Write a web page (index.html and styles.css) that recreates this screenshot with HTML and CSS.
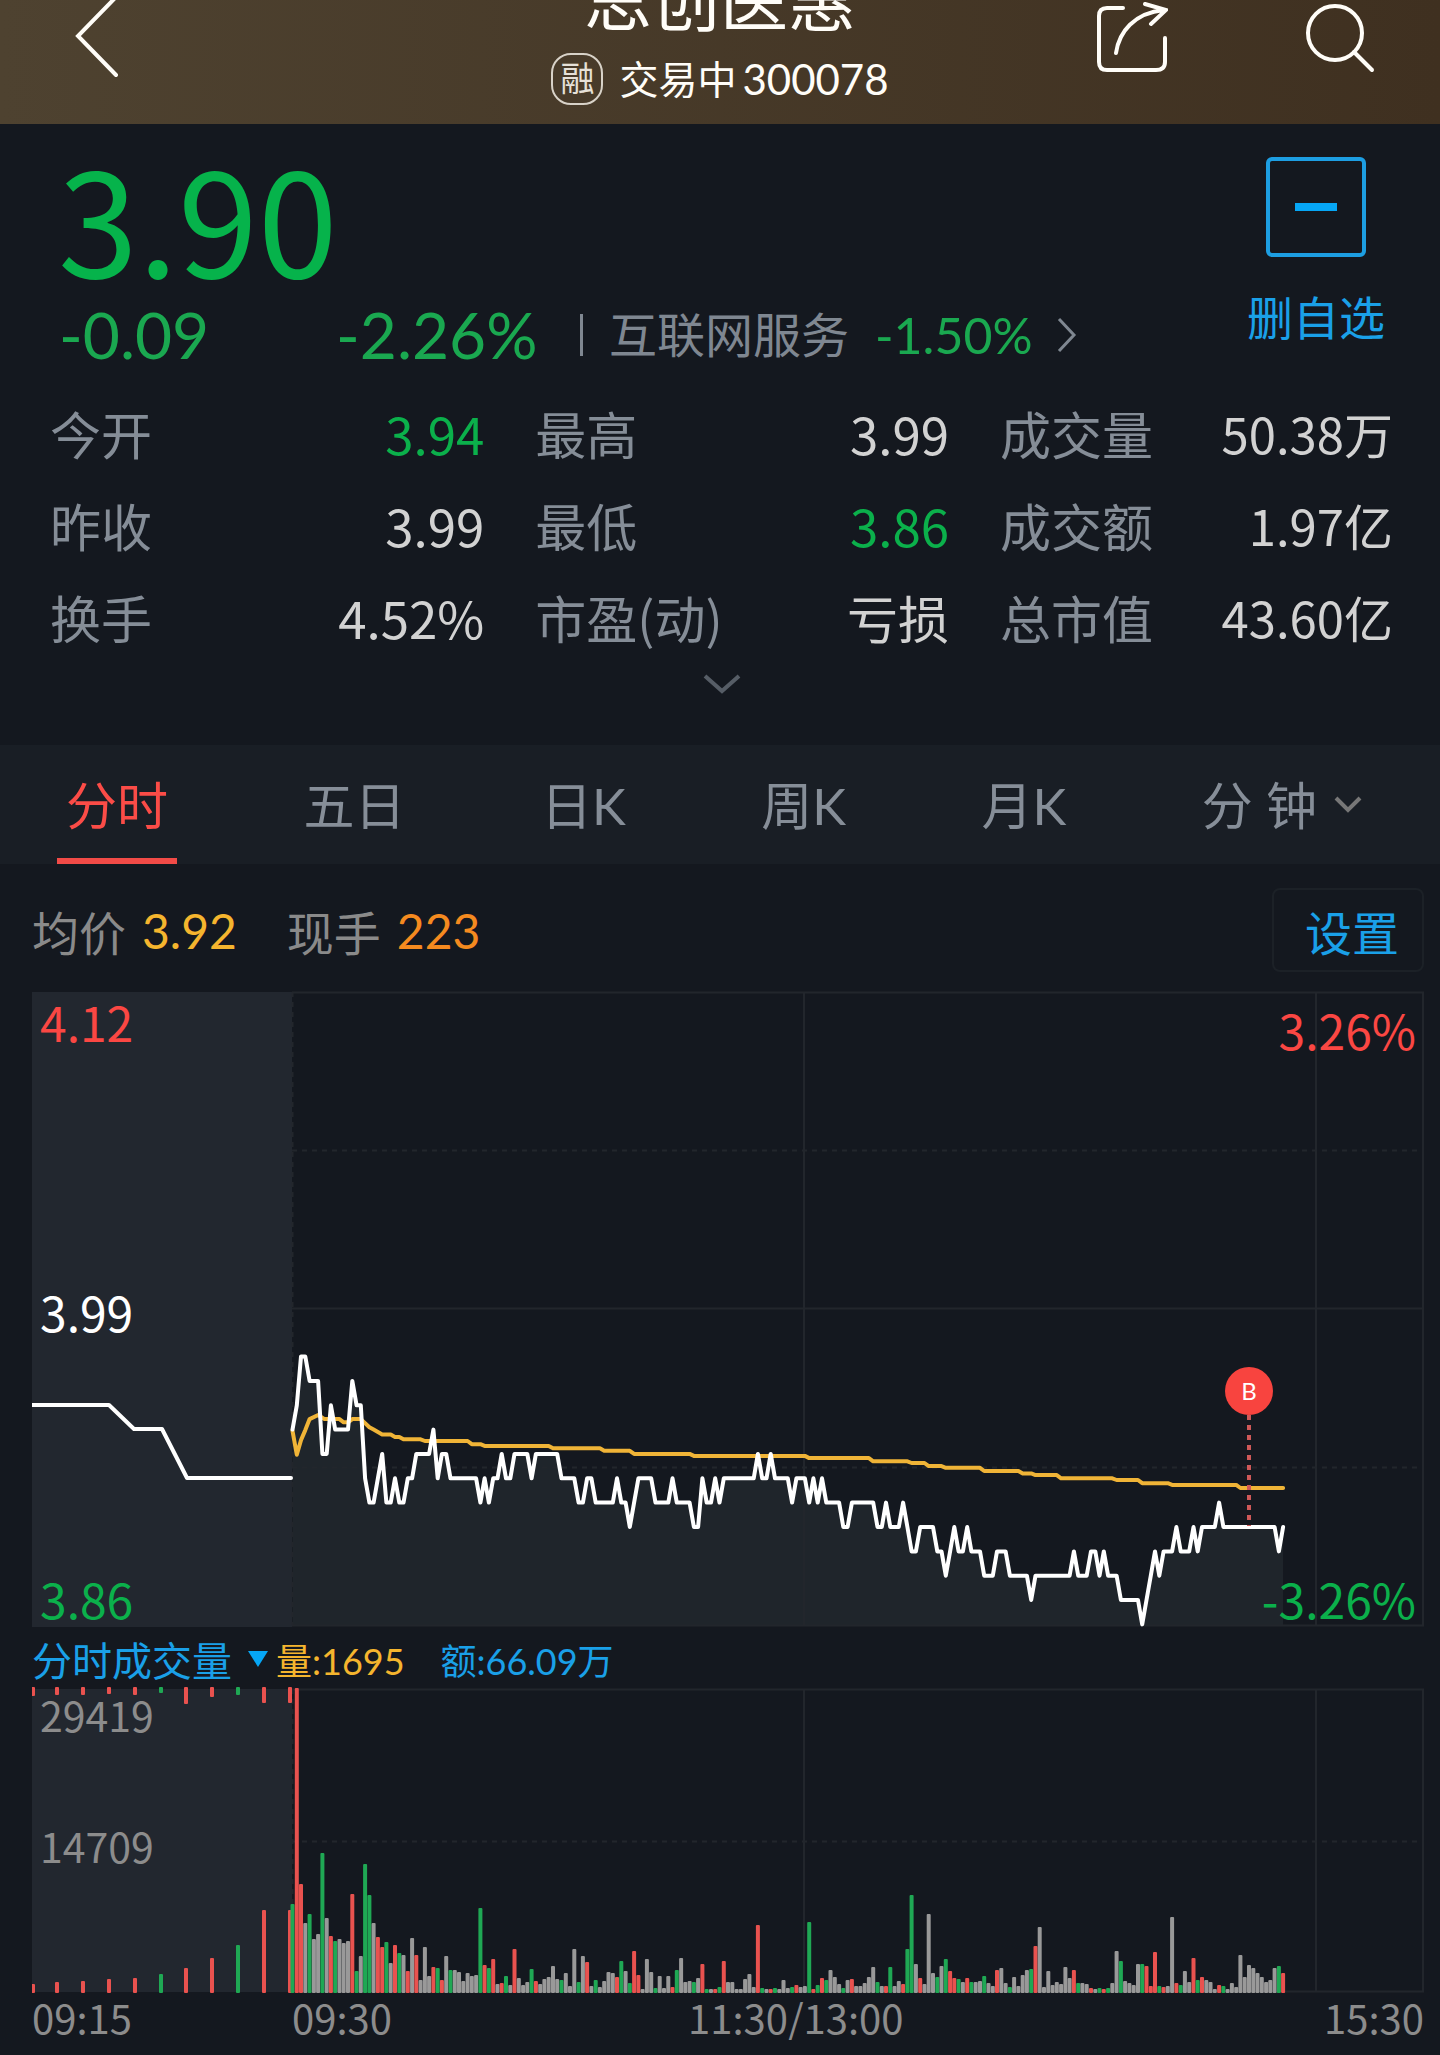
FILE: index.html
```html
<!DOCTYPE html>
<html lang="zh-CN">
<head>
    <meta charset="UTF-8">
    <meta name="viewport" content="width=device-width, initial-scale=1.0">
    <title>思创医惠 300078</title>
    <link rel="stylesheet" href="styles.css">
</head>
<body>
    <header class="header">
        <a class="back" href="#" aria-label="返回">
            <svg width="46" height="80" viewBox="0 0 46 80"><path d="M43 -4L4 36L42 75"/></svg>
        </a>
        <div class="title">
            <h1>思创医惠</h1>
            <p><span class="badge">融</span>交易中<span class="code">300078</span></p>
        </div>
        <div class="tools">
            <a href="#" aria-label="分享">
                <svg width="72" height="76" viewBox="0 0 72 76"><path d="M27 8H11Q3 8 3 16V62Q3 70 11 70H60Q69 70 69 62V38M20 53C23 32 38 13 68 10M49 4L70 10L55 24"/></svg>
            </a>
            <a href="#" aria-label="搜索">
                <svg width="72" height="76" viewBox="0 0 72 76"><circle cx="31" cy="33" r="27"/><path d="M50 52L68 70"/></svg>
            </a>
        </div>
    </header>

    <section class="quote">
        <div class="quote-top">
            <div class="quote-main">
                <div class="price">3.90</div>
                <div class="change">
                    <span class="diff">-0.09</span>
                    <span class="rate">-2.26%</span>
                    <a class="sector" href="#">
                        <i class="bar"></i>
                        <span>互联网服务</span>
                        <span class="sector-rate">-1.50%</span>
                        <svg width="20" height="36" viewBox="0 0 20 36"><path d="M2 2L17 18L2 34"/></svg>
                    </a>
                </div>
            </div>
            <button class="watch" type="button"><span class="minus"></span>删自选</button>
        </div>
        <dl class="stats">
            <div><dt>今开</dt><dd class="green">3.94</dd></div>
            <div><dt>最高</dt><dd>3.99</dd></div>
            <div><dt>成交量</dt><dd>50.38万</dd></div>
            <div><dt>昨收</dt><dd>3.99</dd></div>
            <div><dt>最低</dt><dd class="green">3.86</dd></div>
            <div><dt>成交额</dt><dd>1.97亿</dd></div>
            <div><dt>换手</dt><dd>4.52%</dd></div>
            <div><dt>市盈(动)</dt><dd>亏损</dd></div>
            <div><dt>总市值</dt><dd>43.60亿</dd></div>
        </dl>
        <button class="more" type="button" aria-label="展开">
            <svg width="38" height="20" viewBox="0 0 38 20"><path d="M2 2L19 17L36 2"/></svg>
        </button>
    </section>

    <nav class="tabs">
        <button class="active" type="button">分时</button>
        <button type="button">五日</button>
        <button type="button">日K</button>
        <button type="button">周K</button>
        <button type="button">月K</button>
        <button type="button">分 钟 <svg width="28" height="18" viewBox="0 0 28 18"><path d="M2 3L14 15L26 3"/></svg></button>
    </nav>

    <main class="charts">
        <div class="info">
            <span>均价</span><b class="yellow">3.92</b>
            <span class="hand">现手</span><b class="orange">223</b>
            <button class="setting" type="button">设置</button>
        </div>

        <div class="chart">
            <svg id="price-chart" viewBox="0 0 1392 636">
                <rect class="pane" x="0" y="1" width="260" height="635"/>
                <path id="price-area" class="area"/>
                <path class="grid" d="M260 1.5H1391V634.5H260M260 317.5H1391M772 1V634M1284 1V634"/>
                <path class="grid dash" d="M260 159.5H1391M260 476.5H1391M260.500 1V634"/>
                <path id="avg-line" class="line avg"/>
                <path class="line" d="M0 414H77L102 438H130L155 487H259"/>
                <path id="price-line" class="line"/>
                <path class="buy-stem" d="M1217 424V535"/>
                <circle class="buy" cx="1217" cy="400" r="24"/>
                <text class="buy-text" x="1217" y="409">B</text>
            </svg>
            <span class="label top left red">4.12</span>
            <span class="label middle left">3.99</span>
            <span class="label bottom left green">3.86</span>
            <span class="label top right red">3.26%</span>
            <span class="label bottom right green">-3.26%</span>
        </div>

        <div class="volume-head">
            <button type="button">分时成交量<i class="caret"></i></button>
            <span class="yellow">量:1695</span>
            <span class="blue">额:66.09万</span>
        </div>

        <div class="chart volume">
            <svg id="volume-chart" viewBox="0 0 1392 308">
                <rect class="pane" x="0" y="3" width="260" height="303"/>
                <path class="grid" d="M260 3.500H1391V305.500H260M772 3V305M1284 3V305"/>
                <path class="grid dash" d="M260 155.500H1391M260.500 3V305"/>
                <g id="bars"></g>
            </svg>
            <span class="label vol-max">29419</span>
            <span class="label vol-mid">14709</span>
        </div>

        <div class="times">
            <span>09:15</span>
            <span>09:30</span>
            <span>11:30/13:00</span>
            <span>15:30</span>
        </div>
    </main>
    <script src="chart.js"></script>
</body>
</html>
```
FILE: styles.css
```css
* { box-sizing: border-box; }
body { margin: 0; background: #14181f; color: #d2d2d2; font-family: Lato, "Noto Sans CJK SC", sans-serif; font-size: 50px; }
h1, p, dl, dd { margin: 0; }
a { color: inherit; text-decoration: none; }
button { border: 0; padding: 0; background: none; color: inherit; font: inherit; cursor: pointer; }
b { font-weight: normal; }
svg { display: block; fill: none; stroke: currentColor; stroke-width: 3; }
.green { color: #0bb04b; }
.red { color: #fb4743; }
.yellow { color: #f5b52e; }
.orange { color: #f58a1f; }
.blue { color: #1aa0e8; }
.price, .stats, .label, .times { font-family: "Noto Sans CJK SC", sans-serif; }

/* header */
.header { display: grid; grid-template-columns: 1fr auto 1fr; grid-template-rows: 124px; overflow: hidden; color: #fffdf8; background: linear-gradient(90deg, #4e4230, #3f3020); }
.back { padding-left: 74px; }
.header svg { stroke-width: 4; stroke-linecap: round; }
.title { align-self: end; text-align: center; padding-bottom: 17px; }
.title h1 { font-size: 68px; line-height: 72px; font-weight: normal; margin-bottom: 15px; }
.title p { display: flex; align-items: center; justify-content: center; font-size: 39px; line-height: 56px; }
.badge { width: 52px; height: 52px; border: 2px solid #d8d2c8; border-radius: 20px; color: #e6e1d8; font-size: 34px; line-height: 46px; margin-right: 16px; }
.code { font-size: 42px; margin-left: 6px; }
.tools { display: flex; justify-content: flex-end; gap: 136px; padding-right: 64px; }

/* quote */
.quote { padding: 33px 47px 51px 50px; }
.quote-top { display: flex; justify-content: space-between; height: 230px; }
.quote-main { padding-left: 8px; }
.price { color: #06b34b; font-size: 144px; line-height: 116px; }
.change { display: flex; align-items: center; line-height: 80px; margin-top: 22px; padding-left: 1px; color: #1aa850; font-size: 64px; }
.diff { width: 277px; }
.rate { width: 244px; }
.sector { display: flex; align-items: center; color: #7f8791; font-size: 48px; }
.sector .bar { width: 3px; height: 42px; margin-right: 26px; background: #7f8791; }
.sector-rate { color: #1aa850; font-size: 50px; margin: 0 25px 0 26px; }
.watch { display: flex; flex-direction: column; align-items: center; margin-right: 8px; color: #1aa0e8; font-size: 46px; line-height: 60px; }
.minus { display: grid; place-items: center; width: 100px; height: 100px; margin-bottom: 31px; border: 4px solid #1d9ee2; border-radius: 6px; }
.minus::before { content: ""; width: 42px; height: 8px; background: #06a6f5; }
.stats { display: grid; grid-template-columns: 21fr 20fr 19fr; column-gap: 51px; font-size: 51px; line-height: 92px; }
.stats div { display: flex; justify-content: space-between; }
.stats div:nth-child(3n) dd { font-size: 49px; }
.stats dt { color: #858d97; }
.more { display: block; margin: 11px auto 0; }
.more svg { stroke: #565d66; stroke-width: 4; }

/* period tabs */
.tabs { display: flex; justify-content: space-between; padding: 0 69px 0 57px; background: #191e25; color: #868e98; }
.tabs button { padding: 3px 9px 0; line-height: 116px; font-size: 51px; }
.tabs svg { display: inline-block; vertical-align: 12px; margin-left: 4px; stroke: #777; stroke-width: 4; }
.tabs .active { color: #fb4c47; box-shadow: inset 0 -6px #f24b47; }

/* charts */
.charts { padding: 24px 16px 0 32px; }
.info { display: flex; align-items: center; color: #8a8a8a; font-size: 47px; }
.info b { margin-left: 16px; font-size: 48px; }
.hand { margin-left: 50px; }
.setting { margin-left: auto; width: 152px; height: 84px; padding-left: 8px; border: 2px solid #1c2127; border-radius: 8px; color: #1aa0e8; }
.chart { position: relative; margin-top: 19px; }
.chart svg { width: 100%; height: auto; }
.pane { fill: #22272f; stroke: none; }
.area { fill: #1f252b; stroke: none; }
.grid { stroke: #22262c; stroke-width: 2; }
.dash { stroke-dasharray: 5 5; }
.line { stroke: #fff; stroke-width: 4; stroke-linejoin: round; stroke-linecap: round; }
.avg { stroke: #f0b437; }
.buy { fill: #f8443f; stroke: none; }
.buy-stem { stroke: #cf5858; stroke-width: 4; stroke-dasharray: 5 5; }
.buy-text { fill: #fff; stroke: none; font-size: 24px; text-anchor: middle; }
.label { position: absolute; font-size: 48px; line-height: 60px; }
.left { left: 8px; }
.right { right: 8px; }
.top { top: 0; }
.right.top { top: 8px; }
.middle { top: 290px; color: #fff; }
.bottom { bottom: -1px; }
.volume-head { display: flex; align-items: center; height: 59px; padding-top: 4px; font-size: 40px; }
.volume-head button { display: flex; align-items: center; color: #1aa0e8; }
.volume-head span { font-size: 36px; }
.volume-head .blue { margin-left: 36px; }
.caret { margin: 0 8px 0 16px; border: 10px solid transparent; border-top: 16px solid #06a6f5; border-bottom: 0; }
.volume { margin-top: 0; color: #8c8c8c; }
.volume .label { font-size: 41px; }
.vol-max { left: 8px; top: -2px; }
.vol-mid { left: 8px; top: 129px; }
.times { display: grid; grid-template-columns: 260px 1fr 1fr 260px; color: #8c8c8c; font-size: 40px; line-height: 46px; }
.times span:nth-child(3) { margin-left: -40px; }
.times span:last-child { text-align: right; }
```
FILE: chart.js
```js
const STEP = 4.27;   // one minute on the x axis
const START = 260.5; // 09:30

// [minute, price in cents - 300]
const prices = [
    [0,94],[1,95],[2,97],[3,97],[4,96],[6,96],[7,93],[8,93],[9,95],[10,94],[13,94],[14,96],[15,95],[16,95],[17,92],[18,91],[19,91],
    [21,93],[22,91],[23,91],[24,92],[25,91],[26,91],[27,92],[28,92],[29,93],[32,93],[33,94],[34,92],[35,93],[36,93],[37,92],[43,92],
    [44,91],[45,92],[46,91],[47,92],[48,92],[49,93],[50,92],[51,92],[52,93],[55,93],[56,92],[57,93],[62,93],[63,92],[66,92],[67,91],
    [68,91],[69,92],[70,92],[71,91],[75,91],[76,92],[77,91],[78,91],[79,90],[80,91],[81,92],[84,92],[85,91],[88,91],[89,92],[90,91],
    [93,91],[94,90],[95,90],[96,92],[97,91],[98,91],[99,92],[100,91],[101,92],[108,92],[109,93],[110,92],[111,92],[112,93],[113,92],
    [116,92],[117,91],[118,92],[120,92],[121,91],[122,92],[123,91],[124,92],[125,91],[128,91],[129,90],[130,90],[131,91],[136,91],
    [137,90],[138,90],[139,91],[140,90],[142,90],[143,91],[144,90],[145,89],[146,89],[147,90],[150,90],[151,89],[152,89],[153,88],
    [154,89],[155,90],[156,89],[157,89],[158,90],[159,89],[161,89],[162,88],[164,88],[165,89],[167,89],[168,88],[172,88],[173,87],
    [174,88],[182,88],[183,89],[184,88],[186,88],[187,89],[188,89],[189,88],[190,89],[191,88],[193,88],[194,87],[198,87],[199,86],
    [200,87],[201,88],[202,89],[203,88],[204,89],[206,89],[207,90],[208,89],[210,89],[211,90],[212,89],[213,90],[216,90],[217,91],
    [218,90],[230,90],[231,89],[232,90]
];

const average = [
    [0,93.95],[1,92.97],[2,93.57],[3,93.98],[4,94.43],[6,94.6],[7.5,94.43],[11,94.43],[12,94.3],[13,94.3],[14,94.43],[16,94.43],
    [18,94.1],[19,94],[21,93.8],[23,93.8],[24,93.7],[25,93.7],[26,93.6],[30,93.6],[31,93.53],[41,93.53],[42,93.4],[44,93.4],
    [45,93.33],[60,93.33],[61,93.23],[72,93.23],[73,93.13],[79,93.13],[80,93],[93,93],[94,92.92],[120,92.92],[121,92.83],
    [135,92.83],[136,92.7],[144,92.7],[145,92.63],[148,92.63],[149,92.5],[152,92.5],[153,92.43],[161,92.43],[162,92.3],[170,92.3],
    [171,92.2],[173,92.2],[174,92.13],[179,92.13],[180,92],[192,92],[193,91.93],[198,91.93],[199,91.8],[205,91.8],[206,91.73],
    [221,91.73],[222,91.6],[232,91.6]
];

// r = up, g = down, n = flat, number = bar height
const volumes = `g89 r305 r109 n70 g79 n54 n59 g140 n75 r57 g52 n54 n50 n52 r99 g22 n37 g129 g98 n70 r56 r46 g51 n30 r48 g40 n38 r22
n55 r38 n13 n46 n17 r26 g25 r13 n37 g23 n23 n21 n12 n20 n17 n18 g85 r28 g25 r34 n9 r10 g17 n8 r44 n15 n8 n11 g24 r12 n9 n14 n16 n27
n14 g13 n20 n7 n44 g11 n37 r31 n7 g13 n6 n12 n21 n20 r16 g32 n22 g10 r42 r18 n4 n34 n21 g5 n17 n5 n17 r6 g23 n35 n11 n12 g11 n15 r29
g4 n4 r4 g6 r32 n11 n11 n4 n4 n14 n19 n6 r68 g5 n4 r4 g5 n4 n13 n5 g6 r8 n6 n7 g71 r4 g8 r15 g13 n23 n16 n9 g5 n13 r14 n7 n7 n10 n16
n26 g11 n7 r7 g26 n7 n12 r9 g44 g98 n29 r15 n9 n79 n20 g16 n27 g34 r22 r15 g14 n11 r15 g11 n11 n12 g17 n10 n7 r23 n25 n10 g6 n16 n7
n18 n23 g24 r47 n66 n6 n22 n8 n11 n9 n26 n15 r23 g10 n10 n9 r5 n4 g5 r4 g5 n10 n42 g32 n12 n10 n8 n29 g29 r27 r7 r41 g7 r6 n7 n76 r10
g8 n22 n11 r35 g13 r16 n13 n11 n4 r8 g7 n4 n10 n6 n38 n16 n28 n25 n20 n16 n11 n13 n25 g27 r20`.split(/\s+/);

// call auction: [x, colour, matched height, unmatched height]
const auction = [
    [1,'r',9,9],[25,'r',11,8],[51,'r',12,8],[77,'r',14,7],[103,'r',15,8],[129,'g',19,6],
    [154,'r',25,17],[180,'r',35,10],[206,'g',48,8],[232,'r',83,16],[258,'r',83,16]
];

const colors = { r: '#e9524f', g: '#1fa854', n: '#999' };

function toPath(points) {
    return 'M' + points.map(([m, c]) => `${(START + m * STEP).toFixed(1)} ${(536 - (c - 90) * 24.35).toFixed(1)}`).join('L');
}

function bar(x, y, h, color) {
    return `<rect x="${(x - 2).toFixed(1)}" y="${y}" width="4" height="${h}" rx="1" fill="${colors[color]}" stroke="none"/>`;
}

const line = toPath(prices);
document.getElementById('price-line').setAttribute('d', line);
document.getElementById('price-area').setAttribute('d', `${line}V634H${START}Z`);
document.getElementById('avg-line').setAttribute('d', toPath(average));

let bars = '';
auction.forEach(([x, color, low, high]) => {
    bars += bar(x, 1, high, color) + bar(x, 307 - low, low, color);
});
volumes.forEach((item, i) => {
    const h = Number(item.slice(1));
    bars += bar(START + i * STEP, 307 - h, h, item[0]);
});
document.getElementById('bars').innerHTML = bars;
```
